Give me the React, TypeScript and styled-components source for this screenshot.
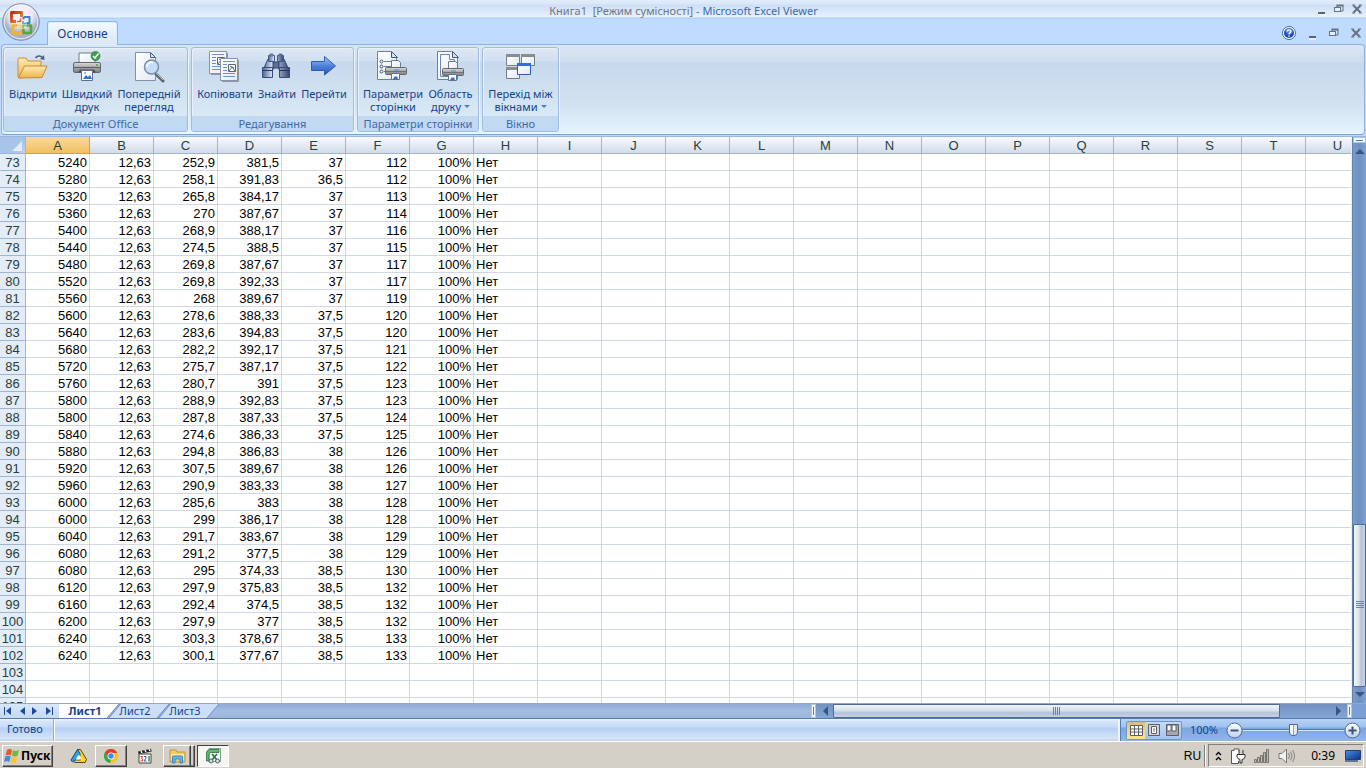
import React from "react";
import styled, { createGlobalStyle, css } from "styled-components";

const UI = `"Noto Sans", "Open Sans", sans-serif`;
const CELL = `"Liberation Sans", Arial, sans-serif`;

const GlobalStyle = createGlobalStyle`
  *, *::before, *::after { box-sizing: border-box; }
  html, body { margin: 0; padding: 0; }
  body { background: #bfdbff; font-family: ${UI}; font-size: 11px; color: #15428b; }
  button { font: inherit; color: inherit; margin: 0; padding: 0; border: 0; background: none; cursor: default; }
  svg { display: block; flex: none; }
`;

const Page = styled.div`
  display: flex;
  flex-direction: column;
  height: 100vh;
  min-height: 360px;
  overflow: hidden;
  position: relative;
`;

/* ---------- window caption ---------- */

const TitleBar = styled.header`
  flex: none;
  height: 19px;
  display: flex;
  align-items: center;
  background: linear-gradient(#e2edfb 0, #dae7f9 4px, #cddef5 5px, #e6f1fe 17px, #b0cef3 18px);
  border-bottom: 1px solid #b3d1f6;
  padding: 0 4px 0 0;
`;

const Title = styled.h1`
  margin: 0;
  flex: 1;
  padding: 4px 0 0 50px;
  text-align: center;
  white-space: pre;
  font-size: 11px;
  line-height: 14px;
  font-weight: 400;
  color: #3e6aaa;
  span { color: #6f7682; }
`;

const WinButtons = styled.div<{ $gap: number }>`
  display: flex;
  align-items: center;
  gap: ${(p) => p.$gap}px;
  button { height: 16px; }
`;

const OfficeButton = styled.button`
  position: absolute;
  left: 2px;
  top: 3px;
  z-index: 2;
`;

const TabRow = styled.nav`
  flex: none;
  height: 26px;
  display: flex;
  align-items: stretch;
  justify-content: space-between;
  padding: 2px 5px 0 47px;
  background: #bfdbff;
`;

const RibbonTab = styled.button`
  position: relative;
  z-index: 1;
  width: 71px;
  height: 24px;
  border: 1px solid #8db2e3;
  border-bottom: 0;
  border-radius: 3px 3px 0 0;
  background: linear-gradient(#f4f9ff, #e3edf9 60%, #dbe6f4);
  box-shadow: inset 0 0 0 1px #d9f1ff;
  font-size: 12px;
  line-height: 22px;
  text-align: center;
`;

/* ---------- ribbon ---------- */

const Ribbon = styled.section`
  flex: none;
  height: 91px;
  margin: -1px 1px 0;
  display: flex;
  gap: 3px;
  padding: 2px 1px;
  border: 1px solid #8db2e3;
  border-bottom-color: #7da0d0;
  border-radius: 4px;
  background: linear-gradient(#dbe6f4 0, #cfdded 17px, #c7d8ed 18px, #d3e2f0 60px, #e3f4ff 88px);
  box-shadow: inset 0 -1px #e6fbff;
`;

const Group = styled.section<{ $width: number }>`
  flex: none;
  width: ${(p) => p.$width}px;
  display: flex;
  flex-direction: column;
  justify-content: space-between;
  border: 1px solid #9ebddf;
  border-radius: 3px;
  overflow: hidden;
  background: linear-gradient(#dee8f5 0, #d1dff0 13px, #c7d8ed 14px, #d8e8f5 67px);
  box-shadow: 1px 1px #e8f4ff, inset 1px 1px #e8f1fb;
`;

const GroupItems = styled.div`
  display: flex;
  padding: 3px 2px 0;
`;

const GroupLabel = styled.h2`
  margin: 0;
  height: 15px;
  padding-top: 1px;
  background: #c1d9f1;
  color: #3e6aaa;
  font-size: 11px;
  line-height: 14px;
  font-weight: 400;
  text-align: center;
  white-space: nowrap;
`;

const RibbonButton = styled.button<{ $width: number }>`
  width: ${(p) => p.$width}px;
  display: flex;
  flex-direction: column;
  align-items: center;
  gap: 4px;
  line-height: 13px;
  white-space: pre;
`;

const Caret = styled.span`
  display: inline-block;
  margin-left: 3px;
  vertical-align: 3px;
  border: 3px solid transparent;
  border-top-color: #567db1;
  border-bottom: 0;
`;

/* ---------- sheet ---------- */

const Work = styled.main`
  flex: 1;
  min-height: 0;
  margin-top: 1px;
  border-top: 1px solid #9ab7dc;
  display: grid;
  grid-template-columns: minmax(0, 1fr) 14px;
  background: #fff;
`;

const SheetView = styled.div`
  overflow: hidden;
  border-right: 1px solid #e8eef7;
`;

const Sheet = styled.table`
  table-layout: fixed;
  width: 1370px;
  border-collapse: separate;
  border-spacing: 0;
  font: 13px/14px ${CELL};
  color: #000;
`;

const cell = css`
  height: 17px;
  padding: 2px 2px 0;
  overflow: hidden;
  white-space: nowrap;
  line-height: 14px;
`;

const Td = styled.td<{ $left?: boolean }>`
  ${cell}
  border-right: 1px solid #d0d7e5;
  border-bottom: 1px solid #d0d7e5;
  text-align: ${(p) => (p.$left ? "left" : "right")};
`;

const ColHead = styled.th<{ $active?: boolean }>`
  ${cell}
  font-weight: 400;
  color: #27413e;
  text-align: center;
  border-right: 1px solid ${(p) => (p.$active ? "#f29536" : "#9eb6ce")};
  border-bottom: 1px solid ${(p) => (p.$active ? "#f29536" : "#9eb6ce")};
  background: ${(p) => (p.$active ? "linear-gradient(#f9d99f, #f1c15f)" : "linear-gradient(#f8fafd, #e6ebf3 50%, #d3dbe9)")};
`;

const RowHead = styled.th`
  ${cell}
  padding: 2px 0 0;
  font-weight: 400;
  color: #27413e;
  text-align: center;
  background: #e4ecf7;
  border-right: 1px solid #9eb6ce;
  border-bottom: 1px solid #9eb6ce;
`;

const Corner = styled.td`
  ${cell}
  background: linear-gradient(135deg, #a9c4e9 70%, #bcd2ef);
  border-right: 1px solid #9eb6ce;
  border-bottom: 1px solid #9eb6ce;
  svg { margin-left: 10px; }
`;

const VScroll = styled.div`
  display: flex;
  flex-direction: column;
  border-left: 1px solid #5f83b5;
  background: linear-gradient(90deg, #7a9bc9, #6d91c0 50%, #7fa1d2);
`;

const HScroll = styled.div`
  flex: 2;
  display: flex;
  background: linear-gradient(#7391c0, #7d9fcd 60%, #86a7d6);
`;

const ScrollCorner = styled.span`
  width: 14px;
  background: #7b9fd3;
`;

const Splitter = styled.div<{ $vertical?: boolean }>`
  flex: none;
  display: grid;
  place-items: center;
  width: ${(p) => (p.$vertical ? "5px" : "13px")};
  height: ${(p) => (p.$vertical ? "14px" : "6px")};
  background: #f4faff;
  border: 1px solid #a9c9ea;
  &::after {
    content: "";
    width: ${(p) => (p.$vertical ? "1px" : "7px")};
    height: ${(p) => (p.$vertical ? "8px" : "1px")};
    background: #567db1;
  }
`;

const ArrowButton = styled.button<{ $w: number; $h: number }>`
  flex: none;
  width: ${(p) => p.$w}px;
  height: ${(p) => p.$h}px;
  display: grid;
  place-items: center;
`;

const Track = styled.div<{ $grow: number }>`
  flex: ${(p) => p.$grow};
`;

const Thumb = styled.div<{ $grow: number; $vertical?: boolean }>`
  flex: ${(p) => p.$grow};
  display: grid;
  place-items: center;
  border: 1px solid #4d6a99;
  border-radius: 1px;
  background: linear-gradient(${(p) => (p.$vertical ? "90deg" : "180deg")}, #f3f6fb, #d9e1ec 45%, #b4c3d6 65%, #c4d3e3);
`;

/* ---------- sheet tabs ---------- */

const SheetBar = styled.div`
  flex: none;
  height: 15px;
  display: flex;
  background: linear-gradient(#8fabd5, #a3bce0 50%, #9bb4da);
  border-top: 1px solid #8aa8d4;
`;

const SheetTabs = styled.div`
  flex: 3;
  display: flex;
  min-width: 0;
`;

const NavArrows = styled.div`
  width: 59px;
  display: flex;
  background: linear-gradient(#d9e7f9, #c3d9f5);
`;

const SheetTab = styled.button<{ $active?: boolean; $order: number }>`
  position: relative;
  z-index: ${(p) => p.$order};
  width: 60px;
  height: 14px;
  margin-left: ${(p) => (p.$active ? 0 : -10)}px;
  padding-right: 8px;
  line-height: 14px;
  font-weight: ${(p) => (p.$active ? 700 : 400)};
  isolation: isolate;
  svg { position: absolute; inset: 0; z-index: -1; }
`;

/* ---------- status bar ---------- */

const StatusBar = styled.footer`
  flex: none;
  height: 23px;
  display: flex;
  border-top: 1px solid #567db1;
  background: linear-gradient(#f0f6fe 0, #d7e6f9 2px, #c7dcf8 8px, #b3d0f5 9px, #d7e5f7 20px, #c3d4ea 21px);
`;

const StatusText = styled.div`
  width: 54px;
  padding-left: 7px;
  line-height: 20px;
  border-right: 1px solid #8fb0da;
  box-shadow: 1px 0 #fff;
`;

const StatusRight = styled.div`
  margin-left: auto;
  width: 246px;
  display: flex;
  align-items: center;
  padding: 0 5px;
  border-left: 1px solid #567db1;
  box-shadow: -2px 0 #f0f6fe;
  background: linear-gradient(#b8d3f5, #9fc2ef 8px, #7ba6e0 9px, #8fb5ea 21px);
`;

const Views = styled.div`
  display: flex;
  width: 56px;
  height: 19px;
  border: 1px solid #6f94c6;
  border-radius: 2px;
  background: linear-gradient(#c5dbf6, #a4c4ee);
`;

const ViewButton = styled.button<{ $on?: boolean }>`
  flex: 1;
  display: grid;
  place-items: center;
  background: ${(p) => (p.$on ? "linear-gradient(#d9b984, #f3cf83 45%, #ffe78e)" : "none")};
`;

const ZoomValue = styled.output`
  width: 44px;
  text-align: center;
  line-height: 18px;
`;

const ZoomSlider = styled.input`
  appearance: none;
  flex: 1;
  min-width: 0;
  height: 16px;
  margin: 0;
  background: linear-gradient(transparent 7px, #4f79b3 7px, #4f79b3 8px, #d5e6fb 8px, #d5e6fb 9px, transparent 9px);
  &::-webkit-slider-thumb {
    appearance: none;
    width: 9px;
    height: 12px;
    border: 1px solid #4d6a99;
    border-radius: 1px 1px 5px 5px;
    background: linear-gradient(90deg, #fff 3px, #8fa3c4 3px, #8fa3c4 4px, #e4ebf5 4px);
  }
`;

/* ---------- task bar ---------- */

const TaskBar = styled.footer`
  flex: none;
  height: 27px;
  display: flex;
  align-items: center;
  padding: 1px 2px 0;
  border-top: 1px solid #fff;
  background: #d4d0c8;
  color: #000;
`;

const raised = css`
  border: 1px solid;
  border-color: #fff #404040 #404040 #fff;
  box-shadow: inset -1px -1px #808080;
`;

const sunken = css`
  border: 1px solid;
  border-color: #404040 #fff #fff #404040;
  background: #f7f6f4;
`;

const StartButton = styled.button`
  ${raised}
  width: 51px;
  height: 22px;
  display: flex;
  align-items: center;
  padding-left: 1px;
  font-weight: 700;
  font-size: 12px;
  line-height: 18px;
`;

const Launchers = styled.div`
  flex: 1;
  display: flex;
  align-items: center;
  padding-left: 8px;
`;

const TaskButton = styled.button<{ $kind?: "raised" | "sunken"; $width: number }>`
  width: ${(p) => p.$width}px;
  height: 22px;
  display: grid;
  place-items: center;
  ${(p) => p.$kind === "raised" && raised}
  ${(p) => p.$kind === "sunken" && sunken}
`;

const StackEdge = styled.span`
  ${raised}
  width: 4px;
  height: 22px;
  margin-right: 2px;
  border-left: 0;
`;

const Language = styled.span`
  font: 12px/22px ${CELL};
  padding-right: 3px;
`;

const Tray = styled.div`
  height: 23px;
  display: flex;
  align-items: center;
  gap: 8px;
  margin-left: 2px;
  padding: 0 2px 0 6px;
  border: 1px solid;
  border-color: #808080 #fff #fff #808080;
  time { padding: 0 2px 0 8px; font-size: 12px; line-height: 18px; }
`;

const Grip = styled.span`
  width: 2px;
  height: 22px;
  border-left: 1px solid #808080;
  background: #fff;
`;

/* ---------- drawings ---------- */

const Svg = ({ w = 32, h = w, children }: { w?: number; h?: number; children: React.ReactNode }) => (
  <svg width={w} height={h} viewBox={`0 0 ${w} ${h}`} fill="none" aria-hidden="true">{children}</svg>
);

const GradientDefs = styled.svg`
  position: absolute;
`;

const Gradients = () => (
  <GradientDefs width="0" height="0" aria-hidden="true">
    <defs>
      <linearGradient id="folder" x2="0" y2="1"><stop stopColor="#ffeaae" /><stop offset="1" stopColor="#efb44d" /></linearGradient>
      <linearGradient id="metal" x2="0" y2="1"><stop stopColor="#dcdcda" /><stop offset=".5" stopColor="#a8a7a5" /><stop offset="1" stopColor="#7c7e83" /></linearGradient>
      <linearGradient id="paper" x2="1" y2="1"><stop stopColor="#fff" /><stop offset="1" stopColor="#e3ebf6" /></linearGradient>
      <linearGradient id="tube"><stop stopColor="#4d6591" /><stop offset=".35" stopColor="#d4e0f3" /><stop offset="1" stopColor="#304672" /></linearGradient>
      <linearGradient id="arrow" x2="0" y2="1"><stop stopColor="#a3c5f7" /><stop offset=".5" stopColor="#4f83dc" /><stop offset="1" stopColor="#2553b4" /></linearGradient>
      <radialGradient id="orb" cy=".3"><stop stopColor="#fff" /><stop offset=".65" stopColor="#e5e9f1" /><stop offset="1" stopColor="#a7b2c8" /></radialGradient>
      <radialGradient id="help" cy=".3"><stop stopColor="#76a7f2" /><stop offset="1" stopColor="#1a48b5" /></radialGradient>
      <linearGradient id="round" x2="0" y2="1"><stop stopColor="#fff" /><stop offset="1" stopColor="#bdd1ec" /></linearGradient>
      <linearGradient id="desk" x2="1" y2="1"><stop stopColor="#4790e8" /><stop offset="1" stopColor="#0c2f86" /></linearGradient>
      <linearGradient id="red" x2="1" y2="1"><stop stopColor="#b92f12" /><stop offset="1" stopColor="#f58a3a" /></linearGradient>
    </defs>
  </GradientDefs>
);

const OfficeLogo = () => (
  <Svg w={38}>
    <circle cx="19" cy="19" r="18.3" fill="url(#orb)" stroke="#8391ab" />
    <circle cx="19" cy="19" r="16.8" stroke="#fff" strokeOpacity=".8" />
    <path d="M14 18.500H9.500V9.500h10V14" stroke="url(#red)" strokeWidth="2.800" strokeLinejoin="round" />
    <path d="M21.500 14h6v6h-3M21.500 14v2.500" stroke="#3b83cc" strokeWidth="2" strokeLinejoin="round" />
    <path d="M15 22.500h-4v8h8v-4" stroke="#f5b427" strokeWidth="2.400" strokeLinejoin="round" />
    <path d="M24.500 22.500h4.500v7.500h-7.500v-4" stroke="#5ba53c" strokeWidth="2.600" strokeLinejoin="round" />
    <path d="M15 18.500h3.500V15.500" stroke="#e2602a" strokeWidth="1.500" /><path d="M21 18v2.500h3" stroke="#5b9ddd" strokeWidth="1.500" />
    <path d="M15.500 22.500H19v3" stroke="#f9c855" strokeWidth="1.500" /><path d="M21 25.500v-3h3" stroke="#7fbf5f" strokeWidth="1.500" />
  </Svg>
);

const Mini = () => <Svg w={9} h={16}><path d="M1 14h7" stroke="#fff" /><path d="M1 12h7" stroke="#5c6673" strokeWidth="2" /></Svg>;
const Restore = () => (
  <Svg w={10} h={16}>
    <path d="M3 7V4.500h6V10H7" stroke="#66717f" /><path d="M2.500 4.500h7" stroke="#66717f" strokeWidth="2" />
    <rect x=".5" y="6.500" width="6" height="4" fill="#e6f0fd" stroke="#66717f" />
  </Svg>
);
const Close = () => <Svg w={10} h={16}><path d="m1.500 4.500 7 7m0-7-7 7" stroke="#66717f" strokeWidth="2" /><path d="M0 4h3m4 0h3M0 12h3m4 0h3" stroke="#66717f" /></Svg>;
const Help = () => (
  <Svg w={14} h={16}>
    <circle cx="7" cy="8" r="6.500" fill="#fff" stroke="#4269ae" /><circle cx="7" cy="8" r="5" fill="url(#help)" />
    <path d="M5 6.600C5 4.300 9 4.300 9 6.500 9 7.900 7 7.700 7 9.300M7 10.400v1.300" stroke="#fff" strokeWidth="1.400" />
  </Svg>
);

const OpenIcon = () => (
  <Svg>
    <path d="M1 26V8q0-1 1-1h7l2 3h13v4L5 27z" fill="url(#folder)" stroke="#c69043" />
    <path d="m1.500 27 6-12H30l-5 11.500z" fill="url(#folder)" stroke="#c48b35" />
    <path d="M18.500 7c2-3 6-2.500 7.500.5" stroke="#4c617f" strokeWidth="1.500" /><path d="m23 8 4.500 1L27 4z" fill="#4c617f" />
  </Svg>
);

const PrinterShape = () => (
  <>
    <path d="M8 12V2h14l2 3v7" fill="url(#paper)" stroke="#6c7b94" />
    <rect x="2.500" y="11.500" width="27" height="10" rx="1.500" fill="url(#metal)" stroke="#66686d" />
    <path d="M3 16.500h26" stroke="#5b5f65" /><path d="M25 14h2" stroke="#4ba043" strokeWidth="1.500" />
    <path d="M7 21.500h18l-2-3H9z" fill="#4b4f55" />
    <path d="M10.500 19.500h11v10h-11z" fill="#fff" stroke="#5f7090" />
    <path d="m12 28 3-4 2 2 2-2 2 4z" fill="#2f74c4" /><circle cx="14" cy="22" r="1" fill="#6ba3dd" />
  </>
);
const PrintIcon = () => (
  <Svg><PrinterShape /><circle cx="24.500" cy="5" r="4.500" fill="#3da049" stroke="#237934" strokeWidth=".6" /><path d="m22 5 2 2 3.500-4.500" stroke="#fff" strokeWidth="1.500" /></Svg>
);
const PreviewIcon = () => (
  <Svg>
    <path d="M2.500 1.500h15l5 5v23h-20z" fill="url(#paper)" stroke="#8090a9" /><path d="M17.500 1.500v5h5z" fill="#d6e0ee" stroke="#52627d" />
    <path d="m23 23 7 7" stroke="#5f6269" strokeWidth="3" strokeLinecap="round" /><path d="m23 22 7 7" stroke="#b7bbc3" />
    <circle cx="18.500" cy="16" r="7" fill="#c5def7" stroke="#7a8cab" strokeWidth="1.500" /><path d="M14 16c0-4 3-5 6-4.500" stroke="#fff" strokeWidth="1.500" />
  </Svg>
);
const PageDoc = ({ x, y }: { x: number; y: number }) => (
  <g transform={`translate(${x} ${y})`}>
    <path d="M.5.5h17v22H.5z" fill="url(#paper)" stroke="#8a94a3" /><path d="M18.500 2v21.500H2" stroke="#8d96a4" />
    <path d="M3 3.500h12M3 6.500h4M3 9.500h4M3 12.500h4M3 15.500h12M3 18.500h12" stroke="#6a93cc" />
    <path d="M8.500 6.500h7v7h-7z" fill="#fff" stroke="#5b6470" /><path d="m9 13 3-4 3 4M10 8l4 2" stroke="#5d6875" />
  </g>
);
const CopyIcon = () => <Svg><PageDoc x={0} y={0} /><PageDoc x={11} y={7} /></Svg>;
const FindIcon = () => (
  <Svg>
    <path d="M12 11h6v6h-6z" fill="#5b719a" stroke="#2f426b" />
    <path d="M7 8 2 19h10V8zM23 8l5 11H18V8z" fill="url(#tube)" stroke="#384c76" />
    <path d="M7.500 4.500h6v6h-6zM16.500 4.500h6v6h-6z" fill="url(#tube)" stroke="#46597e" />
    <path d="M9 3h3v2H9zM18 3h3v2h-3z" fill="url(#tube)" stroke="#60739a" />
    <path d="M1.500 16.500h10v10h-10zM18.500 16.500h10v10h-10z" fill="url(#tube)" stroke="#384c76" />
    <path d="M1.500 19.500h10m7 0h10" stroke="#24375f" />
  </Svg>
);
const GoIcon = () => <Svg><path d="M3.500 10.500h13v-5l11 9.500-11 9v-4.500h-13z" fill="url(#arrow)" stroke="#315cab" strokeLinejoin="round" /></Svg>;
const SmallPrinter = ({ x, y }: { x: number; y: number }) => (
  <g transform={`translate(${x} ${y})`}>
    <path d="M6.500 8V.5h7l2 2V8" fill="url(#paper)" stroke="#6c7b94" />
    <rect x=".5" y="7.500" width="21" height="7" rx="1" fill="url(#metal)" stroke="#66686d" />
    <path d="M1 11.500h20" stroke="#6f7278" /><path d="M9 10h5" stroke="#4f8fd6" />
    <path d="M6.500 13.500h8v6h-8z" fill="#fff" stroke="#5f7090" /><path d="m8 19 2-3 1 1 1-1 1 3z" fill="#2f74c4" />
  </g>
);
const PageSetupIcon = () => (
  <Svg>
    <path d="M.5.5h13l6 6v22H.5z" fill="url(#paper)" stroke="#6e80a0" /><path d="M14.500.5v6h6z" fill="#d7e1ef" stroke="#465775" />
    <circle cx="4.500" cy="10.500" r="1.500" stroke="#44546f" /><circle cx="4.500" cy="15.500" r="1.500" stroke="#44546f" /><circle cx="4.500" cy="20.500" r="1.500" stroke="#44546f" />
    <path d="M7 10.500h8M7 15.500h7M7 20.500h2" stroke="#6c7f9f" /><SmallPrinter x={8} y={9} />
  </Svg>
);
const PrintAreaIcon = () => (
  <Svg>
    <path d="M2.500.5h14l6 6v22h-20z" fill="url(#paper)" stroke="#6e80a0" /><path d="M5.500 3.500h9v5h5v17h-14z" stroke="#6d87b4" /><path d="M17.500.5v6h6z" fill="#d7e1ef" stroke="#465775" />
    <SmallPrinter x={7} y={10} />
  </Svg>
);
const Pane = ({ x, y, on }: { x: number; y: number; on?: boolean }) => (
  <g transform={`translate(${x} ${y})`}><path d="M.5.5h13v11H.5z" fill="url(#paper)" stroke={on ? "#315cb6" : "#777d85"} /><path d="M0 1.500h14" stroke={on ? "#356de0" : "#888d94"} strokeWidth="3" /></g>
);
const WindowsIcon = () => <Svg><Pane x={1} y={3} /><Pane x={16} y={3} /><Pane x={1} y={16} /><Pane x={12} y={12} on /></Svg>;

const Arrow = ({ dir }: { dir: "up" | "down" | "left" | "right" }) => {
  const turn = { up: 0, right: 90, down: 180, left: 270 }[dir];
  return <Svg w={10}><path d="m0 8 5-5 5 5z" fill="#3c547f" transform={`rotate(${turn} 5 5)`} /></Svg>;
};
const NavArrow = ({ left, bar }: { left?: boolean; bar?: boolean }) => (
  <Svg w={9}><g transform={left ? "translate(9 0) scale(-1 1)" : undefined} fill="#1f4a96"><path d="m1 0 5 4-5 4z" />{bar && <path d="M7 0h1v8H7z" />}</g></Svg>
);
const TabShape = ({ active }: { active?: boolean }) => (
  <Svg w={60} h={14}><path d={active ? "M0 0h60L48 14H0z" : "M11.500 0H60L48 14H0z"} fill={active ? "#fff" : "#cddff6"} /><path d={active ? "M60 0 48 14" : "M60 0 48 14M11.500 0 0 14"} stroke="#6f90c2" /></Svg>
);
const ZoomSign = ({ plus }: { plus?: boolean }) => (
  <Svg w={17}><circle cx="8.500" cy="8.500" r="7.500" fill="url(#round)" stroke="#4d6a99" /><path d={plus ? "M4.500 8.500h8M8.500 4.500v8" : "M4.500 8.500h8"} stroke="#3f5478" strokeWidth="2" /></Svg>
);
const ViewGrid = () => <Svg w={13} h={11}><path d="M.5.5h12v10H.5zM0 4h13M0 7h13M4.500 0v11M8.500 0v11" fill="#fff" stroke="#5c6066" /></Svg>;
const ViewPage = () => <Svg w={12}><path d="M.5.5h11v11H.5z" fill="#d3d6da" stroke="#5c6066" /><path d="M3.500 2.500h5v7h-5z" fill="#fff" stroke="#5c6066" /><path d="M5 5h2M5 7h2" stroke="#777" /></Svg>;
const ViewBreak = () => <Svg w={13} h={12}><path d="M.5.500h12v11H.5z" fill="#a4a8ae" stroke="#5c6066" /><path d="M1 1h4v6H1zM6 1h4v6H6z" fill="#fff" stroke="#5c6066" /></Svg>;

const WindowsFlag = () => (
  <Svg w={17} h={16}>
    <path d="M3 2c2-1.500 4-1 5 0L7 7.500C5.500 6.500 3.500 6.500 1.500 7.500z" fill="#e5592a" /><path d="M9 2.300c2 1 4 .8 6-.2l-1.500 5.700c-2 .9-3.800.8-5.500-.1z" fill="#75b83d" />
    <path d="M1.300 8.500c2-1 4-.9 5.500 0L5.300 14C4 13 2 13 0 14z" fill="#3f8ede" /><path d="M7.800 8.800c1.800.9 3.600.9 5.500 0L12 14.400c-2 .9-3.900.8-5.500-.1z" fill="#f8c531" />
  </Svg>
);
const TriangleApp = () => (
  <Svg w={17} h={16}>
    <path d="M7.500 1.500h3l6 10-1.500 3H4.500L3 12h7.500z" fill="#fbd326" stroke="#4a4630" strokeLinejoin="round" />
    <path d="M7.500 1.500 1 12l1.500 2 7.500-6V5.500z" fill="#2ea4da" stroke="#154b78" strokeLinejoin="round" />
    <path d="m9 6.500 3 5H5.500z" fill="#f2f4f4" />
  </Svg>
);
const ChromeApp = () => (
  <Svg w={16}><circle cx="8" cy="8" r="7" fill="#fbc116" /><path d="M1.900 4.500A7 7 0 0 1 14.200 5H8L5 9.700z" fill="#e33b2e" /><path d="M1.900 4.500 5 9.700 8 11l-1 4A7 7 0 0 1 1.900 4.500z" fill="#2da94f" /><circle cx="8" cy="8" r="3.500" fill="#fff" /><circle cx="8" cy="8" r="2.700" fill="#4285f4" /></Svg>
);
const ClapperApp = () => (
  <Svg w={17} h={16}><path d="M2 6h12v9H2z" fill="#fff" stroke="#444" /><path d="M1 3.500 14 .8l.6 2.700L1.600 6z" fill="#222" /><path d="m4 3 1 2m3-3 1 2m3-3 1 2" stroke="#fff" strokeWidth="1.400" /><path d="M3.500 8.500h2l-1 2 1 .5v2h-2" stroke="#d33" /><path d="M7 8.500h2V10l-2 3h2.500" stroke="#2a65b8" /><path d="M12 8v5.500" stroke="#2e8c3b" strokeWidth="1.400" /></Svg>
);
const FolderApp = () => (
  <Svg w={17} h={16}><path d="M1 2h6l1 2h8v10H1z" fill="#f3cb62" stroke="#b99643" /><path d="M2 6h13v6H2z" fill="#fbe7a2" /><path d="M3.500 15V9q0-1 1-1h8q1 0 1 1v6h-2.500v-4H6v4z" fill="#69b5e7" stroke="#3b86bd" /></Svg>
);
const ExcelApp = () => (
  <Svg w={17} h={16}><path d="M4 .5h11.500v13H4z" fill="#fff" stroke="#7aa284" /><path d="M14 1.500H5Q1.500 2 1.500 5v8h2.500V6.500q0-2 2-2h8z" fill="#5fb96e" stroke="#226c36" strokeWidth=".8" /><path d="m7 6 5 6m0-6-5 6" stroke="#287b3b" strokeWidth="1.800" /><circle cx="6" cy="13" r="2" fill="#d5e2ea" stroke="#48606d" /><circle cx="12.500" cy="13" r="2" fill="#d5e2ea" stroke="#48606d" /></Svg>
);
const Chevrons = () => <Svg w={7} h={10}><path d="m1 4 2.500-2.500L6 4M1 9l2.500-2.500L6 9" stroke="#000" strokeWidth="1.400" /></Svg>;
const PowerIcon = () => <Svg w={16}><path d="M9 2.500V1H4v1.500H1.500v13h7V13" fill="#fff" stroke="#555" /><path d="M9 2v4m4-4v4M7 6.500h8V9q-1 2.500-3 2.500v3.500h-2v-3.500Q7.500 11 7 9z" fill="#fff" stroke="#333" /></Svg>;
const SignalIcon = () => <Svg w={16} h={14}><path d="M.5 10.500h2v3h-2zM3.500 8.500h2v5h-2zM6.500 6.500h2v7h-2zM9.500 3.500h2v10h-2zM12.500.5h2v13h-2z" fill="#bdbbb6" stroke="#77756f" /></Svg>;
const SpeakerIcon = () => <Svg w={17} h={16}><path d="M1 5.500h3L8.500 1v14L4 10.500H1z" fill="#f2f2f2" stroke="#777" /><path d="M10.500 5q2 3 0 6M12.500 3.500q3 4.500 0 9M14.500 2q4 6 0 12" stroke="#85837e" /></Svg>;
const DesktopIcon = () => <Svg w={16} h={14}><path d="M.5 1.500h15v9H.5z" fill="url(#desk)" stroke="#22406e" /><path d="M0 12h13" stroke="#5e7598" strokeWidth="2" /></Svg>;

/* ---------- data ---------- */

const COLUMNS = "ABCDEFGHIJKLMNOPQRSTU".split("");

const DATA = `5240 252,9 381,5 37 112
5280 258,1 391,83 36,5 112
5320 265,8 384,17 37 113
5360 270 387,67 37 114
5400 268,9 388,17 37 116
5440 274,5 388,5 37 115
5480 269,8 387,67 37 117
5520 269,8 392,33 37 117
5560 268 389,67 37 119
5600 278,6 388,33 37,5 120
5640 283,6 394,83 37,5 120
5680 282,2 392,17 37,5 121
5720 275,7 387,17 37,5 122
5760 280,7 391 37,5 123
5800 288,9 392,83 37,5 123
5800 287,8 387,33 37,5 124
5840 274,6 386,33 37,5 125
5880 294,8 386,83 38 126
5920 307,5 389,67 38 126
5960 290,9 383,33 38 127
6000 285,6 383 38 128
6000 299 386,17 38 128
6040 291,7 383,67 38 129
6080 291,2 377,5 38 129
6080 295 374,33 38,5 130
6120 297,9 375,83 38,5 132
6160 292,4 374,5 38,5 132
6200 297,9 377 38,5 132
6240 303,3 378,67 38,5 133
6240 300,1 377,67 38,5 133`
  .split("\n")
  .map((line) => {
    const [a, c, d, e, f] = line.split(" ");
    return [a, "12,63", c, d, e, f, "100%", "Нет"];
  });

const ROWS: string[][] = [...DATA, [], [], []];

type Command = { label: string; width: number; Icon: React.FC; menu?: boolean };

const GROUPS: { name: string; width: number; items: Command[] }[] = [
  { name: "Документ Office", width: 185, items: [
    { label: "Відкрити", width: 54, Icon: OpenIcon },
    { label: "Швидкий\nдрук", width: 54, Icon: PrintIcon },
    { label: "Попередній\nперегляд", width: 70, Icon: PreviewIcon },
  ] },
  { name: "Редагування", width: 163, items: [
    { label: "Копіювати", width: 62, Icon: CopyIcon },
    { label: "Знайти", width: 42, Icon: FindIcon },
    { label: "Перейти", width: 52, Icon: GoIcon },
  ] },
  { name: "Параметри сторінки", width: 122, items: [
    { label: "Параметри\nсторінки", width: 66, Icon: PageSetupIcon },
    { label: "Область\nдруку", width: 49, Icon: PrintAreaIcon, menu: true },
  ] },
  { name: "Вікно", width: 77, items: [
    { label: "Перехід між\nвікнами", width: 71, Icon: WindowsIcon, menu: true },
  ] },
];

const WindowControls = ({ gap, help }: { gap: number; help?: boolean }) => (
  <WinButtons $gap={gap}>
    {help && <button aria-label="Довідка"><Help /></button>}
    <button aria-label="Згорнути"><Mini /></button>
    <button aria-label="Відновити"><Restore /></button>
    <button aria-label="Закрити"><Close /></button>
  </WinButtons>
);

export default function App() {
  return (
    <Page>
      <GlobalStyle />
      <Gradients />
      <OfficeButton aria-label="Office"><OfficeLogo /></OfficeButton>
      <TitleBar>
        <Title><span>{"Книга1  [Режим сумісності] - "}</span>Microsoft Excel Viewer</Title>
        <WindowControls gap={8} />
      </TitleBar>
      <TabRow>
        <RibbonTab>Основне</RibbonTab>
        <WindowControls gap={12} help />
      </TabRow>
      <Ribbon>
        {GROUPS.map((group) => (
          <Group key={group.name} $width={group.width}>
            <GroupItems>
              {group.items.map(({ label, width, Icon, menu }) => (
                <RibbonButton key={label} $width={width}>
                  <Icon />
                  <span>{label}{menu && <Caret />}</span>
                </RibbonButton>
              ))}
            </GroupItems>
            <GroupLabel>{group.name}</GroupLabel>
          </Group>
        ))}
      </Ribbon>

      <Work>
        <SheetView>
          <Sheet>
            <colgroup>
              <col width="26" />
              {COLUMNS.map((c) => <col key={c} width="64" />)}
            </colgroup>
            <thead>
              <tr>
                <Corner><Svg w={10}><path d="M10 0v10H0z" fill="#e3edfa" /></Svg></Corner>
                {COLUMNS.map((c) => <ColHead key={c} scope="col" $active={c === "A"}>{c}</ColHead>)}
              </tr>
            </thead>
            <tbody>
              {ROWS.map((row, i) => (
                <tr key={i}>
                  <RowHead scope="row">{73 + i}</RowHead>
                  {COLUMNS.map((c, j) => <Td key={c} $left={c === "H"}>{row[j]}</Td>)}
                </tr>
              ))}
            </tbody>
          </Sheet>
        </SheetView>
        <VScroll>
          <Splitter />
          <ArrowButton $w={13} $h={15} aria-label="Вгору"><Arrow dir="up" /></ArrowButton>
          <Track $grow={367} />
          <Thumb $grow={162} $vertical>
            <Svg w={8} h={8}><path d="M0 .5h8M0 2.500h8M0 4.500h8M0 6.500h8" stroke="#73839b" /></Svg>
          </Thumb>
          <ArrowButton $w={13} $h={16} aria-label="Вниз"><Arrow dir="down" /></ArrowButton>
        </VScroll>
      </Work>

      <SheetBar>
        <SheetTabs>
          <NavArrows>
            <ArrowButton $w={14} $h={14} aria-label="Перший аркуш"><NavArrow left bar /></ArrowButton>
            <ArrowButton $w={14} $h={14} aria-label="Попередній аркуш"><NavArrow left /></ArrowButton>
            <ArrowButton $w={14} $h={14} aria-label="Наступний аркуш"><NavArrow /></ArrowButton>
            <ArrowButton $w={14} $h={14} aria-label="Останній аркуш"><NavArrow bar /></ArrowButton>
          </NavArrows>
          <SheetTab $active $order={3}><TabShape active />Лист1</SheetTab>
          <SheetTab $order={2}><TabShape />Лист2</SheetTab>
          <SheetTab $order={1}><TabShape />Лист3</SheetTab>
        </SheetTabs>
        <HScroll>
          <Splitter $vertical />
          <ArrowButton $w={17} $h={14} aria-label="Ліворуч"><Arrow dir="left" /></ArrowButton>
          <Thumb $grow={445}>
            <Svg w={8} h={8}><path d="M.5 0v8M2.500 0v8M4.500 0v8M6.500 0v8" stroke="#73839b" /></Svg>
          </Thumb>
          <Track $grow={51} />
          <ArrowButton $w={16} $h={14} aria-label="Праворуч"><Arrow dir="right" /></ArrowButton>
          <Splitter $vertical />
        </HScroll>
        <ScrollCorner />
      </SheetBar>

      <StatusBar>
        <StatusText>Готово</StatusText>
        <StatusRight>
          <Views>
            <ViewButton $on aria-label="Звичайний"><ViewGrid /></ViewButton>
            <ViewButton aria-label="Розмітка"><ViewPage /></ViewButton>
            <ViewButton aria-label="Сторінки"><ViewBreak /></ViewButton>
          </Views>
          <ZoomValue>100%</ZoomValue>
          <button aria-label="Зменшити"><ZoomSign /></button>
          <ZoomSlider type="range" min={0} max={100} defaultValue={50} aria-label="Масштаб" />
          <button aria-label="Збільшити"><ZoomSign plus /></button>
        </StatusRight>
      </StatusBar>

      <TaskBar>
        <StartButton><WindowsFlag />Пуск</StartButton>
        <Launchers>
          <TaskButton $width={34} aria-label="Диск"><TriangleApp /></TaskButton>
          <TaskButton $width={32} $kind="raised" aria-label="Chrome"><ChromeApp /></TaskButton>
          <TaskButton $width={36} aria-label="Відео"><ClapperApp /></TaskButton>
          <TaskButton $width={28} $kind="raised" aria-label="Провідник"><FolderApp /></TaskButton>
          <StackEdge />
          <TaskButton $width={32} $kind="sunken" aria-label="Excel Viewer"><ExcelApp /></TaskButton>
        </Launchers>
        <Language>RU</Language>
        <Grip />
        <Tray>
          <Chevrons />
          <PowerIcon />
          <SignalIcon />
          <SpeakerIcon />
          <time>0:39</time>
          <DesktopIcon />
        </Tray>
      </TaskBar>
    </Page>
  );
}
